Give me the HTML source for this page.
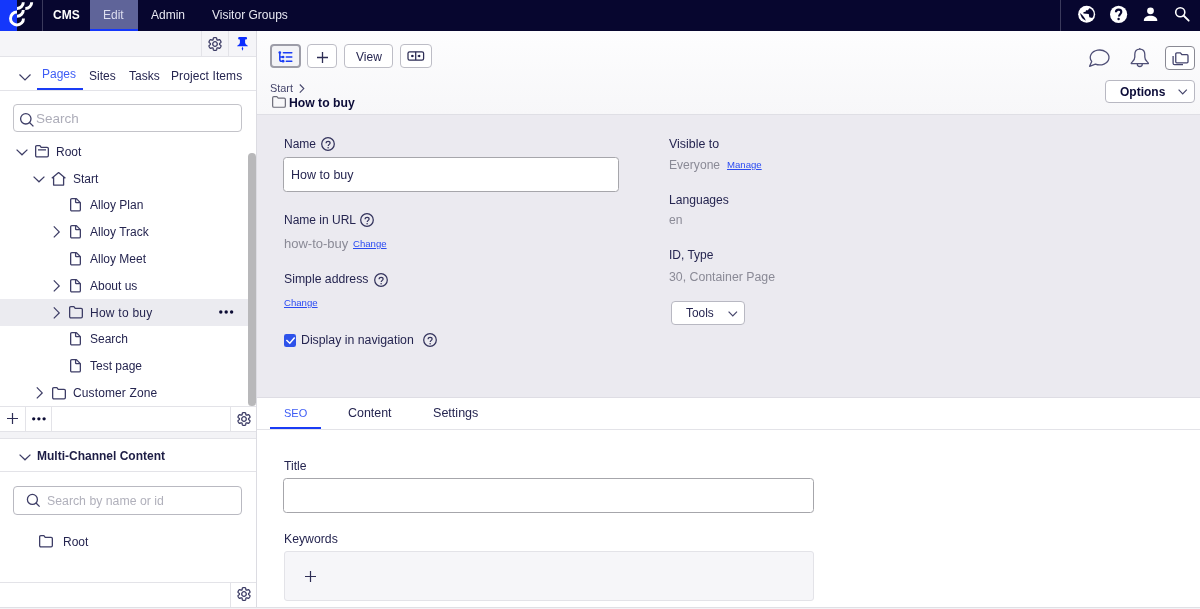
<!DOCTYPE html>
<html><head><meta charset="utf-8">
<style>
*{margin:0;padding:0;box-sizing:border-box}
html,body{width:1200px;height:609px;overflow:hidden;background:#fff;font-family:"Liberation Sans",sans-serif;color:#252550}
.a{position:absolute}
.t{position:absolute;white-space:nowrap;line-height:14px;font-size:12px;will-change:transform}
svg{position:absolute;overflow:visible}
.ln{position:absolute;background:#e3e3e8}
</style></head><body>
<svg width="0" height="0" style="position:absolute"><defs><g id="gearp"><path d="M4.50 -0.00 L4.51 -0.12 L4.53 -0.24 L4.58 -0.36 L4.67 -0.49 L4.81 -0.63 L5.00 -0.79 L5.25 -0.97 L5.52 -1.17 L5.74 -1.38 L5.90 -1.58 L5.98 -1.77 L6.00 -1.95 L5.99 -2.12 L5.95 -2.28 L5.90 -2.44 L5.84 -2.60 L5.77 -2.75 L5.70 -2.90 L5.62 -3.05 L5.54 -3.20 L5.46 -3.34 L5.37 -3.48 L5.27 -3.62 L5.17 -3.76 L5.07 -3.89 L4.95 -4.01 L4.83 -4.12 L4.69 -4.22 L4.52 -4.29 L4.32 -4.32 L4.07 -4.28 L3.77 -4.19 L3.47 -4.06 L3.19 -3.93 L2.95 -3.85 L2.76 -3.80 L2.60 -3.79 L2.47 -3.81 L2.36 -3.85 L2.25 -3.90 L2.15 -3.96 L2.06 -4.05 L1.98 -4.15 L1.91 -4.29 L1.85 -4.48 L1.81 -4.73 L1.78 -5.03 L1.74 -5.36 L1.68 -5.66 L1.58 -5.90 L1.46 -6.06 L1.31 -6.17 L1.16 -6.24 L1.00 -6.30 L0.83 -6.33 L0.67 -6.36 L0.50 -6.38 L0.33 -6.39 L0.17 -6.40 L0.00 -6.40 L-0.17 -6.40 L-0.33 -6.39 L-0.50 -6.38 L-0.67 -6.36 L-0.83 -6.33 L-1.00 -6.30 L-1.16 -6.24 L-1.31 -6.17 L-1.46 -6.06 L-1.58 -5.90 L-1.68 -5.66 L-1.74 -5.36 L-1.78 -5.03 L-1.81 -4.73 L-1.85 -4.48 L-1.91 -4.29 L-1.98 -4.15 L-2.06 -4.05 L-2.15 -3.96 L-2.25 -3.90 L-2.36 -3.85 L-2.47 -3.81 L-2.60 -3.79 L-2.76 -3.80 L-2.95 -3.85 L-3.19 -3.93 L-3.47 -4.06 L-3.77 -4.19 L-4.07 -4.28 L-4.32 -4.32 L-4.52 -4.29 L-4.69 -4.22 L-4.83 -4.12 L-4.95 -4.01 L-5.07 -3.89 L-5.17 -3.76 L-5.27 -3.62 L-5.37 -3.48 L-5.46 -3.34 L-5.54 -3.20 L-5.62 -3.05 L-5.70 -2.90 L-5.77 -2.75 L-5.84 -2.60 L-5.90 -2.44 L-5.95 -2.28 L-5.99 -2.12 L-6.00 -1.95 L-5.98 -1.77 L-5.90 -1.58 L-5.74 -1.38 L-5.52 -1.17 L-5.25 -0.97 L-5.00 -0.79 L-4.81 -0.63 L-4.67 -0.49 L-4.58 -0.36 L-4.53 -0.24 L-4.51 -0.12 L-4.50 -0.00 L-4.51 0.12 L-4.53 0.24 L-4.58 0.36 L-4.67 0.49 L-4.81 0.63 L-5.00 0.79 L-5.25 0.97 L-5.52 1.17 L-5.74 1.38 L-5.90 1.58 L-5.98 1.77 L-6.00 1.95 L-5.99 2.12 L-5.95 2.28 L-5.90 2.44 L-5.84 2.60 L-5.77 2.75 L-5.70 2.90 L-5.62 3.05 L-5.54 3.20 L-5.46 3.34 L-5.37 3.48 L-5.27 3.62 L-5.17 3.76 L-5.07 3.89 L-4.95 4.01 L-4.83 4.12 L-4.69 4.22 L-4.52 4.29 L-4.32 4.32 L-4.07 4.28 L-3.77 4.19 L-3.47 4.06 L-3.19 3.93 L-2.95 3.85 L-2.76 3.80 L-2.60 3.79 L-2.47 3.81 L-2.36 3.85 L-2.25 3.90 L-2.15 3.96 L-2.06 4.05 L-1.98 4.15 L-1.91 4.29 L-1.85 4.48 L-1.81 4.73 L-1.78 5.03 L-1.74 5.36 L-1.68 5.66 L-1.58 5.90 L-1.46 6.06 L-1.31 6.17 L-1.16 6.24 L-1.00 6.30 L-0.83 6.33 L-0.67 6.36 L-0.50 6.38 L-0.33 6.39 L-0.17 6.40 L-0.00 6.40 L0.17 6.40 L0.33 6.39 L0.50 6.38 L0.67 6.36 L0.83 6.33 L1.00 6.30 L1.16 6.24 L1.31 6.17 L1.46 6.06 L1.58 5.90 L1.68 5.66 L1.74 5.36 L1.78 5.03 L1.81 4.73 L1.85 4.48 L1.91 4.29 L1.98 4.15 L2.06 4.05 L2.15 3.96 L2.25 3.90 L2.36 3.85 L2.47 3.81 L2.60 3.79 L2.76 3.80 L2.95 3.85 L3.19 3.93 L3.47 4.06 L3.77 4.19 L4.07 4.28 L4.32 4.32 L4.52 4.29 L4.69 4.22 L4.83 4.12 L4.95 4.01 L5.07 3.89 L5.17 3.76 L5.27 3.62 L5.37 3.48 L5.46 3.34 L5.54 3.20 L5.62 3.05 L5.70 2.90 L5.77 2.75 L5.84 2.60 L5.90 2.44 L5.95 2.28 L5.99 2.12 L6.00 1.95 L5.98 1.77 L5.90 1.58 L5.74 1.38 L5.52 1.17 L5.25 0.97 L5.00 0.79 L4.81 0.63 L4.67 0.49 L4.58 0.36 L4.53 0.24 L4.51 0.12Z" fill="none" stroke="#3d3d66" stroke-width="1.3" stroke-linejoin="round"/><circle cx="0" cy="0" r="2.3" fill="none" stroke="#3d3d66" stroke-width="1.3"/></g></defs></svg>

<!-- HEADER -->
<div class="a" style="left:0;top:0;width:1200px;height:31px;background:#07062f"></div>
<div class="a" style="left:0;top:0;width:17px;height:31px;background:#1437fb"></div>
<svg style="left:0;top:0" width="40" height="31" viewBox="0 0 40 31">
 <g fill="none" stroke="#fff" stroke-width="2.95">
  <path d="M17 11.95 A6.5 6.5 0 1 0 23.5 18.45"/>
  <path d="M17 16.25 A6.3 6.3 0 0 0 23.3 9.95"/>
  <path d="M17 8.45 A6.3 6.3 0 0 0 23.3 2.15"/>
  <path d="M25.3 8.55 A6.4 6.4 0 0 0 31.7 2.15"/>
 </g>
</svg>
<div class="a" style="left:42px;top:0;width:1px;height:31px;background:#3b3a5c"></div>
<div class="t" style="left:53px;top:7.7px;color:#fff;font-weight:bold">CMS</div>
<div class="a" style="left:90px;top:0;width:48px;height:29px;background:#5f6499"></div>
<div class="a" style="left:90px;top:29px;width:48px;height:2px;background:#1437fb"></div>
<div class="t" style="left:103px;top:7.7px;color:#dedff0">Edit</div>
<div class="t" style="left:151px;top:7.7px;color:#e8e8f2">Admin</div>
<div class="t" style="left:212px;top:7.7px;color:#e8e8f2">Visitor Groups</div>
<div class="a" style="left:1060px;top:0;width:1px;height:31px;background:#3b3a5c"></div>
<!-- globe -->
<svg style="left:1076px;top:4px" width="22" height="21" viewBox="0 0 22 21">
 <circle cx="10.65" cy="10.25" r="8.5" fill="#fff"/>
 <path d="M4.1 9.0 Q4.6 14.2 9.8 16.8 Q9.2 14.8 7.9 13 Q6.4 10.8 4.1 9.0Z" fill="#07062f"/>
 <path d="M13.3 4.2 A5.9 5.9 0 0 1 16.2 13.9 L13.3 13.2 L12.8 10.1 L7.4 9.5 V8.3 L9.9 7.4 V6.3 L11.9 6.3Z" fill="#07062f"/>
</svg>
<!-- help -->
<svg style="left:1106px;top:4px" width="22" height="21" viewBox="0 0 22 21">
 <circle cx="12.6" cy="10.3" r="8.6" fill="#fff"/>
 <path d="M9.9 8.2 C9.9 6.4 11 5.6 12.6 5.6 C14.2 5.6 15.3 6.6 15.3 8 C15.3 9.9 13 10 13 12.6" fill="none" stroke="#07062f" stroke-width="2.1"/>
 <circle cx="12.6" cy="15" r="1.2" fill="#07062f"/>
</svg>
<!-- user -->
<svg style="left:1143px;top:7px" width="15" height="15" viewBox="0 0 15 15">
 <circle cx="7.5" cy="3.8" r="3.4" fill="#fff"/>
 <path d="M0.8 13.4 C0.8 10.4 3.7 8.7 7.5 8.7 C11.3 8.7 14.3 10.4 14.3 13.4 Q14.3 13.9 13.8 13.9 H1.3 Q0.8 13.9 0.8 13.4Z" fill="#fff"/>
</svg>
<!-- search -->
<svg style="left:1172px;top:4px" width="20" height="20" viewBox="0 0 20 20">
 <circle cx="8.25" cy="8.25" r="4.55" fill="none" stroke="#fff" stroke-width="1.6"/>
 <path d="M11.5 11.5 L16.7 16.7" stroke="#fff" stroke-width="1.8" stroke-linecap="round"/>
</svg>

<!-- LEFT PANE -->
<div class="a" style="left:0;top:31px;width:256px;height:25px;background:#f5f5f8"></div>
<div class="ln" style="left:0;top:56px;width:256px;height:1px"></div>
<div class="ln" style="left:201px;top:31px;width:1px;height:25px"></div>
<div class="ln" style="left:228px;top:31px;width:1px;height:25px"></div>
<div class="ln" style="left:256px;top:31px;width:1px;height:578px;background:#dcdce2"></div>
<svg style="left:214.9px;top:43.9px" width="1" height="1" viewBox="0 0 1 1"><use href="#gearp"/></svg>
<!-- pin -->
<svg style="left:237px;top:37px" width="11" height="14" viewBox="0 0 11 14">
 <path d="M2.35 0.1 H8.85 A1.25 1.25 0 0 1 8.85 2.6 H8.1 V5.8 Q8.2 7.6 10.4 8.4 Q10.9 8.6 10.9 9.3 H0.1 Q0.1 8.6 0.6 8.4 Q2.8 7.6 2.9 5.8 V2.6 H2.35 A1.25 1.25 0 0 1 2.35 0.1Z" fill="#0a2cff"/>
 <path d="M5.5 9.6 L6.3 11.8 L5.5 13.8 L4.7 11.8Z" fill="#0a2cff"/>
</svg>

<!-- tabs -->
<svg style="left:19px;top:74px" width="12" height="7" viewBox="0 0 12 7"><path d="M0.5 0.5 L6 6 L11.5 0.5" fill="none" stroke="#3d3d66" stroke-width="1.2"/></svg>
<div class="t" style="left:42.3px;top:67.3px;color:#3d5cf5">Pages</div>
<div class="t" style="left:88.8px;top:68.8px">Sites</div>
<div class="t" style="left:128.8px;top:68.8px">Tasks</div>
<div class="t" style="left:171.3px;top:68.8px;letter-spacing:0.1px">Project Items</div>
<div class="ln" style="left:0;top:90px;width:256px;height:1px"></div>
<div class="a" style="left:37px;top:88px;width:46px;height:2px;background:#1a3cf5"></div>

<!-- search -->
<div class="a" style="left:13.3px;top:103.5px;width:228.8px;height:28.3px;border:1.7px solid #c3c3c9;border-radius:4px;background:#fff"></div>
<svg style="left:19px;top:112px" width="16" height="16" viewBox="0 0 16 16"><circle cx="6.8" cy="6.8" r="5.2" fill="none" stroke="#3d3d66" stroke-width="1.3"/><path d="M10.5 10.5 L14.4 14.4" stroke="#3d3d66" stroke-width="1.3"/></svg>
<div class="t" style="left:35.8px;top:111.8px;font-size:13.5px;color:#adadb9">Search</div>

<!-- tree -->
<div class="a" style="left:0;top:299px;width:248px;height:27px;background:#ebebf0"></div>
<div id="tree">
<svg style="left:16px;top:148.70px" width="12" height="7" viewBox="0 0 12 7"><path d="M0.6 0.6 L6 5.8 L11.4 0.6" fill="none" stroke="#3d3d66" stroke-width="1.25"/></svg>
<svg style="left:35px;top:145.20px" width="14" height="13" viewBox="0 0 14 13"><path d="M0.65 1.9 Q0.65 0.65 1.9 0.65 H4.9 L6.2 2.3 H12.1 Q13.35 2.3 13.35 3.55 V10.6 Q13.35 11.85 12.1 11.85 H1.9 Q0.65 11.85 0.65 10.6Z M3 4.8 H11" fill="none" stroke="#3d3d66" stroke-width="1.3" stroke-linejoin="round"/></svg>
<div class="t" style="left:55.5px;top:144.70px">Root</div>
<svg style="left:33px;top:175.50px" width="12" height="7" viewBox="0 0 12 7"><path d="M0.6 0.6 L6 5.8 L11.4 0.6" fill="none" stroke="#3d3d66" stroke-width="1.25"/></svg>
<svg style="left:51px;top:171.50px" width="16" height="14" viewBox="0 0 16 14"><path d="M0.8 6.2 L7.6 0.6 L14.4 6.2 M2.6 4.9 V13.1 H12.6 V4.9" fill="none" stroke="#3d3d66" stroke-width="1.3" stroke-linejoin="round"/></svg>
<div class="t" style="left:72.5px;top:171.50px">Start</div>
<svg style="left:70px;top:198.30px" width="12" height="14" viewBox="0 0 12 14"><path d="M1.9 0.65 H6.4 L10.35 4.6 V11.7 Q10.35 12.95 9.1 12.95 H1.9 Q0.65 12.95 0.65 11.7 V1.9 Q0.65 0.65 1.9 0.65Z M5.6 0.9 V4.1 Q5.6 4.7 6.2 4.7 H10.1" fill="none" stroke="#3d3d66" stroke-width="1.3" stroke-linejoin="round"/></svg>
<div class="t" style="left:89.5px;top:198.30px">Alloy Plan</div>
<svg style="left:53px;top:226.10px" width="7" height="12" viewBox="0 0 7 12"><path d="M0.8 0.4 L6.2 5.9 L0.8 11.4" fill="none" stroke="#3d3d66" stroke-width="1.25"/></svg>
<svg style="left:70px;top:225.10px" width="12" height="14" viewBox="0 0 12 14"><path d="M1.9 0.65 H6.4 L10.35 4.6 V11.7 Q10.35 12.95 9.1 12.95 H1.9 Q0.65 12.95 0.65 11.7 V1.9 Q0.65 0.65 1.9 0.65Z M5.6 0.9 V4.1 Q5.6 4.7 6.2 4.7 H10.1" fill="none" stroke="#3d3d66" stroke-width="1.3" stroke-linejoin="round"/></svg>
<div class="t" style="left:89.5px;top:225.10px">Alloy Track</div>
<svg style="left:70px;top:251.90px" width="12" height="14" viewBox="0 0 12 14"><path d="M1.9 0.65 H6.4 L10.35 4.6 V11.7 Q10.35 12.95 9.1 12.95 H1.9 Q0.65 12.95 0.65 11.7 V1.9 Q0.65 0.65 1.9 0.65Z M5.6 0.9 V4.1 Q5.6 4.7 6.2 4.7 H10.1" fill="none" stroke="#3d3d66" stroke-width="1.3" stroke-linejoin="round"/></svg>
<div class="t" style="left:89.5px;top:251.90px">Alloy Meet</div>
<svg style="left:53px;top:279.70px" width="7" height="12" viewBox="0 0 7 12"><path d="M0.8 0.4 L6.2 5.9 L0.8 11.4" fill="none" stroke="#3d3d66" stroke-width="1.25"/></svg>
<svg style="left:70px;top:278.70px" width="12" height="14" viewBox="0 0 12 14"><path d="M1.9 0.65 H6.4 L10.35 4.6 V11.7 Q10.35 12.95 9.1 12.95 H1.9 Q0.65 12.95 0.65 11.7 V1.9 Q0.65 0.65 1.9 0.65Z M5.6 0.9 V4.1 Q5.6 4.7 6.2 4.7 H10.1" fill="none" stroke="#3d3d66" stroke-width="1.3" stroke-linejoin="round"/></svg>
<div class="t" style="left:89.5px;top:278.70px">About us</div>
<svg style="left:53px;top:306.50px" width="7" height="12" viewBox="0 0 7 12"><path d="M0.8 0.4 L6.2 5.9 L0.8 11.4" fill="none" stroke="#3d3d66" stroke-width="1.25"/></svg>
<svg style="left:69px;top:306.20px" width="14" height="13" viewBox="0 0 14 13"><path d="M0.65 1.9 Q0.65 0.65 1.9 0.65 H4.9 L6.2 2.3 H12.1 Q13.35 2.3 13.35 3.55 V10.6 Q13.35 11.85 12.1 11.85 H1.9 Q0.65 11.85 0.65 10.6Z" fill="none" stroke="#3d3d66" stroke-width="1.3" stroke-linejoin="round"/></svg>
<div class="t" style="left:89.5px;top:305.50px;letter-spacing:0.25px">How to buy</div>
<svg style="left:70px;top:332.30px" width="12" height="14" viewBox="0 0 12 14"><path d="M1.9 0.65 H6.4 L10.35 4.6 V11.7 Q10.35 12.95 9.1 12.95 H1.9 Q0.65 12.95 0.65 11.7 V1.9 Q0.65 0.65 1.9 0.65Z M5.6 0.9 V4.1 Q5.6 4.7 6.2 4.7 H10.1" fill="none" stroke="#3d3d66" stroke-width="1.3" stroke-linejoin="round"/></svg>
<div class="t" style="left:89.5px;top:332.30px">Search</div>
<svg style="left:70px;top:359.10px" width="12" height="14" viewBox="0 0 12 14"><path d="M1.9 0.65 H6.4 L10.35 4.6 V11.7 Q10.35 12.95 9.1 12.95 H1.9 Q0.65 12.95 0.65 11.7 V1.9 Q0.65 0.65 1.9 0.65Z M5.6 0.9 V4.1 Q5.6 4.7 6.2 4.7 H10.1" fill="none" stroke="#3d3d66" stroke-width="1.3" stroke-linejoin="round"/></svg>
<div class="t" style="left:89.5px;top:359.10px">Test page</div>
<svg style="left:36px;top:386.90px" width="7" height="12" viewBox="0 0 7 12"><path d="M0.8 0.4 L6.2 5.9 L0.8 11.4" fill="none" stroke="#3d3d66" stroke-width="1.25"/></svg>
<svg style="left:52px;top:386.60px" width="14" height="13" viewBox="0 0 14 13"><path d="M0.65 1.9 Q0.65 0.65 1.9 0.65 H4.9 L6.2 2.3 H12.1 Q13.35 2.3 13.35 3.55 V10.6 Q13.35 11.85 12.1 11.85 H1.9 Q0.65 11.85 0.65 10.6Z" fill="none" stroke="#3d3d66" stroke-width="1.3" stroke-linejoin="round"/></svg>
<div class="t" style="left:72.5px;top:385.90px;letter-spacing:0.12px">Customer Zone</div>
<svg style="left:219px;top:309.50px" width="15" height="4" viewBox="0 0 15 4"><circle cx="1.8" cy="2" r="1.7" fill="#0d0d35"/><circle cx="7.2" cy="2" r="1.7" fill="#0d0d35"/><circle cx="12.6" cy="2" r="1.7" fill="#0d0d35"/></svg>
</div><!--/tree-->


<!-- scrollbar -->
<div class="a" style="left:248.3px;top:152.6px;width:7.7px;height:253.6px;background:#b8b8ba;border-radius:3.85px"></div>
<!-- tree bottom toolbar -->
<div class="ln" style="left:0;top:406px;width:256px;height:1px"></div>
<div class="ln" style="left:25px;top:407px;width:1px;height:24px"></div>
<div class="ln" style="left:51px;top:407px;width:1px;height:24px"></div>
<div class="ln" style="left:230px;top:407px;width:1px;height:24px"></div>
<svg style="left:7px;top:412.7px" width="11" height="11" viewBox="0 0 11 11"><path d="M5.5 0 V11 M0 5.5 H11" stroke="#2d2d55" stroke-width="1.2"/></svg>
<svg style="left:31.5px;top:417px" width="14" height="4" viewBox="0 0 14 4"><circle cx="1.7" cy="1.8" r="1.65" fill="#0d0d35"/><circle cx="6.9" cy="1.8" r="1.65" fill="#0d0d35"/><circle cx="12.1" cy="1.8" r="1.65" fill="#0d0d35"/></svg>
<svg style="left:243.6px;top:418.8px" width="1" height="1" viewBox="0 0 1 1"><use href="#gearp"/></svg>
<!-- splitter -->
<div class="a" style="left:0;top:431px;width:256px;height:8px;background:#f3f3f6;border-top:1px solid #e3e3e8;border-bottom:1px solid #e3e3e8"></div>
<!-- multi-channel -->
<svg style="left:19px;top:453.7px" width="12" height="7" viewBox="0 0 12 7"><path d="M0.6 0.6 L6 5.8 L11.4 0.6" fill="none" stroke="#3d3d66" stroke-width="1.25"/></svg>
<div class="t" style="left:37.2px;top:448.6px;font-weight:bold;color:#1d1d45">Multi-Channel Content</div>
<div class="ln" style="left:0;top:471px;width:256px;height:1px"></div>
<div class="a" style="left:13.3px;top:486px;width:228.8px;height:28.5px;border:1.5px solid #b9b9c1;border-radius:4px;background:#fff"></div>
<svg style="left:26px;top:493px" width="15" height="15" viewBox="0 0 15 15"><circle cx="6.4" cy="6.4" r="5" fill="none" stroke="#3d3d66" stroke-width="1.3"/><path d="M10 10 L13.6 13.6" stroke="#3d3d66" stroke-width="1.3"/></svg>
<div class="t" style="left:46.5px;top:494px;font-size:12.3px;color:#b0b0bb">Search by name or id</div>
<svg style="left:39px;top:535px" width="14" height="13" viewBox="0 0 14 13"><path d="M0.65 1.9 Q0.65 0.65 1.9 0.65 H4.9 L6.2 2.3 H12.1 Q13.35 2.3 13.35 3.55 V10.6 Q13.35 11.85 12.1 11.85 H1.9 Q0.65 11.85 0.65 10.6Z" fill="none" stroke="#3d3d66" stroke-width="1.3" stroke-linejoin="round"/></svg>
<div class="t" style="left:63.4px;top:534.6px">Root</div>
<div class="ln" style="left:0;top:582px;width:256px;height:1px"></div>
<div class="ln" style="left:230px;top:583px;width:1px;height:24px"></div>
<svg style="left:243.6px;top:594.2px" width="1" height="1" viewBox="0 0 1 1"><use href="#gearp"/></svg>
<div class="a" style="left:0;top:607px;width:1200px;height:2px;background:#f3f3f6;border-top:1px solid #e0e0e5"></div>

<!-- MAIN TOOLBAR -->
<div class="a" style="left:257px;top:31px;width:943px;height:83px;background:linear-gradient(#fdfdfe,#f7f7f9)"></div>
<div class="ln" style="left:257px;top:114px;width:943px;height:1px;background:#dfdfe5"></div>
<div class="a" style="left:270px;top:44px;width:30.5px;height:24px;border:2px solid #9d9da8;border-radius:4px;background:#f3f3f6"></div>
<svg style="left:278px;top:51px" width="15" height="12" viewBox="0 0 15 12"><g fill="#1a3cf5"><circle cx="1.8" cy="1.6" r="1.35"/><circle cx="5.1" cy="6" r="1.35"/><circle cx="5.1" cy="10.2" r="1.35"/></g><path d="M1.8 1.6 V8.4 Q1.8 10.2 3.6 10.2 H5 M1.8 6 H5 M5.4 1.7 H13.8 M8.3 6 H13.8 M8.3 10.2 H13.8" fill="none" stroke="#1a3cf5" stroke-width="1.5" stroke-linecap="round"/></svg>
<div class="a" style="left:307px;top:44px;width:30px;height:24px;border:1.2px solid #bdbdc6;border-radius:4px;background:#fff"></div>
<svg style="left:317px;top:51.7px" width="11" height="11" viewBox="0 0 11 11"><path d="M5.5 0 V11 M0 5.5 H11" stroke="#2d2d55" stroke-width="1.3"/></svg>
<div class="a" style="left:344px;top:44px;width:49px;height:24px;border:1.2px solid #bdbdc6;border-radius:4px;background:#fff"></div>
<div class="t" style="left:355.6px;top:50px">View</div>
<div class="a" style="left:400px;top:44px;width:32px;height:24px;border:1.2px solid #bdbdc6;border-radius:4px;background:#fff"></div>
<svg style="left:407px;top:51px" width="18" height="11" viewBox="0 0 18 11"><rect x="1.0" y="0.75" width="15.6" height="8.4" rx="1.6" fill="none" stroke="#2d2d55" stroke-width="1.25"/><path d="M8.7 0.8 V9.05" stroke="#2d2d55" stroke-width="1.3"/><path d="M4.1 5 Q4.1 3.7 5.4 3.7 L7.3 5 L5.4 6.3 Q4.1 6.3 4.1 5Z M13.4 5 Q13.4 3.7 12.1 3.7 L10.2 5 L12.1 6.3 Q13.4 6.3 13.4 5Z" fill="#1d1d48"/></svg>
<!-- breadcrumb -->
<div class="t" style="left:269.9px;top:81.1px;font-size:10.9px;color:#45456b">Start</div>
<svg style="left:299px;top:83.5px" width="6" height="10" viewBox="0 0 6 10"><path d="M0.8 0.5 L4.8 4.6 L0.8 8.7" fill="none" stroke="#45456b" stroke-width="1.1"/></svg>
<svg style="left:271.5px;top:95.5px" width="14" height="12" viewBox="0 0 14 12"><path d="M0.65 1.9 Q0.65 0.65 1.9 0.65 H4.9 L6.2 2.1 H12.1 Q13.35 2.1 13.35 3.35 V10 Q13.35 11.25 12.1 11.25 H1.9 Q0.65 11.25 0.65 10Z" fill="none" stroke="#6b6b78" stroke-width="1.2" stroke-linejoin="round"/></svg>
<div class="t" style="left:288.6px;top:95.6px;font-weight:bold;font-size:12.2px;color:#0c0c38">How to buy</div>
<!-- right icons -->
<svg style="left:1086px;top:45px" width="26" height="25" viewBox="0 0 26 25"><path d="M5.7 16.4 A9.35 7.45 0 1 1 9.4 19.1 L3.6 21.3 Z" fill="none" stroke="#4f4f76" stroke-width="1.3" stroke-linejoin="round"/></svg>
<svg style="left:1129.7px;top:45px" width="26" height="25" viewBox="0 0 26 25"><path d="M1.2 18.6 Q1.2 17.6 2.4 16.7 Q4.8 14.8 4.8 12 V9.6 Q4.8 4.1 9.8 4.1 Q14.8 4.1 14.8 9.6 V12 Q14.8 14.8 17.2 16.7 Q18.4 17.6 18.4 18.6 Z M9.8 2.9 V4.1 M7.3 19 A2.5 2.5 0 0 0 12.3 19" fill="none" stroke="#4f4f76" stroke-width="1.3" stroke-linejoin="round"/></svg>
<div class="a" style="left:1165px;top:46px;width:30px;height:23.5px;border:1.8px solid #8a8a94;border-radius:4px;background:#fff"></div>
<svg style="left:1172px;top:52px" width="17" height="14" viewBox="0 0 17 14"><path d="M3.75 1.9 Q3.75 0.85 4.8 0.85 H8.4 L10 2.7 H15 Q16 2.7 16 3.7 V9.8 Q16 10.8 15 10.8 H4.8 Q3.75 10.8 3.75 9.8Z M1.1 4.1 V11.2 Q1.1 12.7 2.6 12.7 H11" fill="none" stroke="#45456e" stroke-width="1.3" stroke-linejoin="round"/></svg>
<div class="a" style="left:1105px;top:80px;width:90px;height:22.5px;border:1.3px solid #b8b8c2;border-radius:4px;background:#fff"></div>
<div class="t" style="left:1119.7px;top:84.6px;font-weight:bold;color:#0c0c38">Options</div>
<svg style="left:1178px;top:89px" width="10" height="6" viewBox="0 0 10 6"><path d="M0.6 0.6 L4.7 4.8 L8.8 0.6" fill="none" stroke="#45456b" stroke-width="1.2"/></svg>

<!-- GRAY FORM AREA -->
<div class="a" style="left:257px;top:115px;width:943px;height:283px;background:#ebeaf0;border-bottom:1px solid #dedde4"></div>

<!-- form left col -->
<div class="t" style="left:284.2px;top:137.1px">Name</div>
<svg style="left:321px;top:137px" width="14" height="14" viewBox="0 0 14 14"><circle cx="7" cy="7" r="6.3" fill="none" stroke="#33335c" stroke-width="1.25"/><path d="M5.1 6.2 C5.1 4.9 5.9 4.3 7.1 4.3 C8.3 4.3 9.1 5 9.1 6 C9.1 7.3 7.2 7.5 7.2 9.1" fill="none" stroke="#33335c" stroke-width="1.2"/><circle cx="7.1" cy="10.7" r="0.75" fill="#33335c"/></svg>
<div class="a" style="left:283px;top:157px;width:336.3px;height:34.8px;border:1.4px solid #a6a6ab;border-radius:3.5px;background:#fff"></div>
<div class="t" style="left:290.7px;top:167.7px;font-size:12.5px;color:#252550">How to buy</div>
<div class="t" style="left:284.1px;top:213.1px">Name in URL</div>
<svg style="left:360px;top:213px" width="14" height="14" viewBox="0 0 14 14"><circle cx="7" cy="7" r="6.3" fill="none" stroke="#33335c" stroke-width="1.25"/><path d="M5.1 6.2 C5.1 4.9 5.9 4.3 7.1 4.3 C8.3 4.3 9.1 5 9.1 6 C9.1 7.3 7.2 7.5 7.2 9.1" fill="none" stroke="#33335c" stroke-width="1.2"/><circle cx="7.1" cy="10.7" r="0.75" fill="#33335c"/></svg>
<div class="t" style="left:284px;top:236.8px;font-size:13px;color:#8a8a96">how-to-buy</div>
<div class="t" style="left:353px;top:237px;font-size:9.6px;color:#2b4bf2;text-decoration:underline">Change</div>
<div class="t" style="left:284px;top:272.4px;font-size:12.25px">Simple address</div>
<svg style="left:373.6px;top:272.5px" width="14" height="14" viewBox="0 0 14 14"><circle cx="7" cy="7" r="6.3" fill="none" stroke="#33335c" stroke-width="1.25"/><path d="M5.1 6.2 C5.1 4.9 5.9 4.3 7.1 4.3 C8.3 4.3 9.1 5 9.1 6 C9.1 7.3 7.2 7.5 7.2 9.1" fill="none" stroke="#33335c" stroke-width="1.2"/><circle cx="7.1" cy="10.7" r="0.75" fill="#33335c"/></svg>
<div class="t" style="left:284px;top:296.4px;font-size:9.6px;color:#2b4bf2;text-decoration:underline">Change</div>
<div class="a" style="left:283.7px;top:333.9px;width:12.5px;height:12.7px;background:#2d52ea;border-radius:2.3px"></div>
<svg style="left:283.7px;top:333.9px" width="13" height="13" viewBox="0 0 13 13"><path d="M2.4 5.95 L5.8 9.2 L10.7 3.5" fill="none" stroke="#fff" stroke-width="1.5"/></svg>
<div class="t" style="left:300.9px;top:333.3px;font-size:12.3px">Display in navigation</div>
<svg style="left:423px;top:333px" width="14" height="14" viewBox="0 0 14 14"><circle cx="7" cy="7" r="6.3" fill="none" stroke="#33335c" stroke-width="1.25"/><path d="M5.1 6.2 C5.1 4.9 5.9 4.3 7.1 4.3 C8.3 4.3 9.1 5 9.1 6 C9.1 7.3 7.2 7.5 7.2 9.1" fill="none" stroke="#33335c" stroke-width="1.2"/><circle cx="7.1" cy="10.7" r="0.75" fill="#33335c"/></svg>
<!-- form right col -->
<div class="t" style="left:669px;top:136.8px;font-size:12.4px">Visible to</div>
<div class="t" style="left:669px;top:157.8px;font-size:12.1px;color:#8a8a96">Everyone</div>
<div class="t" style="left:727.3px;top:158px;font-size:9.6px;color:#2b4bf2;text-decoration:underline">Manage</div>
<div class="t" style="left:669px;top:193px;font-size:12.1px">Languages</div>
<div class="t" style="left:669px;top:213px;font-size:12.1px;color:#8a8a96">en</div>
<div class="t" style="left:668.6px;top:248.3px">ID, Type</div>
<div class="t" style="left:669px;top:270px;font-size:12.3px;color:#8a8a96">30, Container Page</div>
<div class="a" style="left:671px;top:301px;width:74px;height:24px;border:1.3px solid #b8b8c2;border-radius:4px;background:#fff"></div>
<div class="t" style="left:685.8px;top:306.4px;font-size:11.9px">Tools</div>
<svg style="left:728px;top:311px" width="10" height="6" viewBox="0 0 10 6"><path d="M0.6 0.6 L4.8 4.9 L9 0.6" fill="none" stroke="#45456b" stroke-width="1.2"/></svg>

<!-- SEO tabs -->
<div class="ln" style="left:257px;top:429px;width:943px;height:1px"></div>
<div class="a" style="left:270px;top:427px;width:50.5px;height:2px;background:#1a3cf5"></div>
<div class="t" style="left:284px;top:406px;font-size:11px;color:#3d5cf5">SEO</div>
<div class="t" style="left:348px;top:406px;font-size:12.45px">Content</div>
<div class="t" style="left:432.6px;top:406px;font-size:12.57px">Settings</div>
<div class="t" style="left:284.3px;top:458.6px;font-size:12.2px">Title</div>
<div class="a" style="left:283.3px;top:478px;width:530.7px;height:34.7px;border:1.4px solid #a6a6ab;border-radius:3.5px;background:#fff"></div>
<div class="t" style="left:283.8px;top:531.8px;font-size:12.25px">Keywords</div>
<div class="a" style="left:283.7px;top:551px;width:530.3px;height:49.7px;border:1px solid #e3e3e8;border-radius:3px;background:#f6f6f9"></div>
<svg style="left:305.2px;top:570.5px" width="11" height="11" viewBox="0 0 11 11"><path d="M5.5 0 V11 M0 5.5 H11" stroke="#2d2d55" stroke-width="1.2"/></svg>

</body></html>
